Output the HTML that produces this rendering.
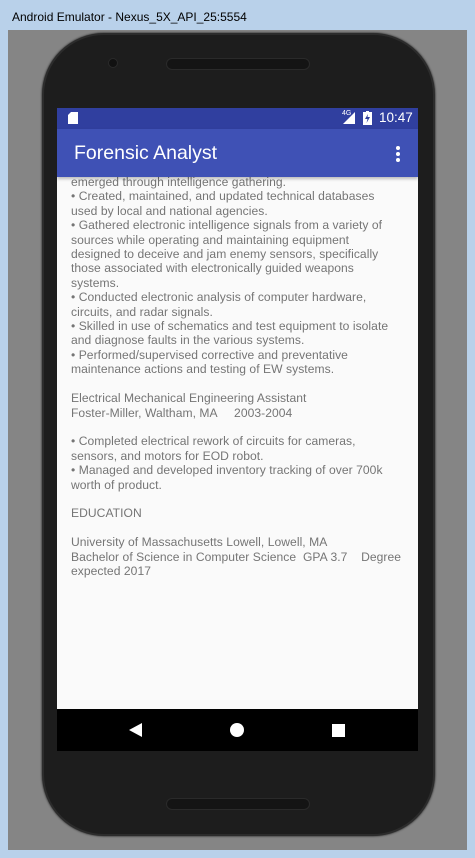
<!DOCTYPE html>
<html><head><meta charset="utf-8"><style>
*{margin:0;padding:0;box-sizing:border-box}
body{width:475px;height:858px;background:#b9d1ea;position:relative;overflow:hidden;font-family:"Liberation Sans",sans-serif}
.title{position:absolute;left:12px;top:10px;font-size:12px;color:#000}
.gray{position:absolute;left:8px;top:30px;width:459px;height:820px;background:#858585}
.phone{position:absolute;left:42px;top:33px;width:393px;height:803px;background:#1d1d1d;border-radius:62px;border:2px solid #2c2c2c;box-shadow:0 0 2px #111}
.spk{position:absolute;left:166px;width:144px;height:12px;border-radius:6px;background:#141414;border:1px solid #2a2a2a}
.cam{position:absolute;left:108px;top:58px;width:10px;height:10px;border-radius:50%;background:#111;border:1px solid #2a2a2a}
.screen{position:absolute;left:57px;top:108px;width:361px;height:643px;background:#fafafa;overflow:hidden}
.status{position:absolute;left:0;top:0;width:361px;height:21px;background:#303f9f;color:#fff}
.app{position:absolute;left:0;top:21px;width:361px;height:48px;background:#3f51b5;box-shadow:0 2px 3px rgba(0,0,0,.25);z-index:2}
.app .t{position:absolute;left:17px;top:13px;font-size:19.5px;color:#fff}
.content{position:absolute;left:14px;top:67px;font-size:12.1px;line-height:14.4px;color:#757575;white-space:pre;letter-spacing:0.05px}
.nav{position:absolute;left:0;top:601px;width:361px;height:42px;background:#000}
</style></head><body>
<div class="title">Android Emulator - Nexus_5X_API_25:5554</div>
<div class="gray"></div>
<div class="phone"></div>
<div class="spk" style="top:58px"></div>
<div class="cam"></div>
<div class="spk" style="top:798px"></div>
<div class="screen">
 <div class="status">
  <svg style="position:absolute;left:11px;top:4px" width="10" height="12"><path d="M3 0H10V12H0V3Z" fill="#fff"/></svg>
  <span style="position:absolute;left:285px;top:2px;font-size:7px">4G</span>
  <svg style="position:absolute;left:284px;top:4px" width="14" height="12"><path d="M14 0V12H2Z" fill="#fff"/></svg>
  <svg style="position:absolute;left:306px;top:3px" width="9" height="14"><rect x="0" y="1" width="9" height="13" fill="#fff"/><rect x="3" y="0" width="3" height="2" fill="#fff"/><path d="M5 3L2 8H4.5L3.5 12L7 6H4.5Z" fill="#303f9f"/></svg>
  <span style="position:absolute;left:322px;top:2px;font-size:13.5px">10:47</span>
 </div>
 <div class="app"><div class="t">Forensic Analyst</div>
  <svg style="position:absolute;left:338px;top:17px" width="6" height="16"><circle cx="3" cy="2" r="2" fill="#fff"/><circle cx="3" cy="8" r="2" fill="#fff"/><circle cx="3" cy="14" r="2" fill="#fff"/></svg></div>
 <div class="content">emerged through intelligence gathering.
• Created, maintained, and updated technical databases
used by local and national agencies.
• Gathered electronic intelligence signals from a variety of
sources while operating and maintaining equipment
designed to deceive and jam enemy sensors, specifically
those associated with electronically guided weapons
systems.
• Conducted electronic analysis of computer hardware,
circuits, and radar signals.
• Skilled in use of schematics and test equipment to isolate
and diagnose faults in the various systems.
• Performed/supervised corrective and preventative
maintenance actions and testing of EW systems.

Electrical Mechanical Engineering Assistant
Foster-Miller, Waltham, MA     2003-2004

• Completed electrical rework of circuits for cameras,
sensors, and motors for EOD robot.
• Managed and developed inventory tracking of over 700k
worth of product.

EDUCATION

University of Massachusetts Lowell, Lowell, MA
Bachelor of Science in Computer Science  GPA 3.7    Degree
expected 2017</div>
 <div class="nav">
  <svg style="position:absolute;left:72px;top:14px" width="13" height="14"><path d="M13 0V14L0 7Z" fill="#fff"/></svg>
  <svg style="position:absolute;left:173px;top:14px" width="14" height="14"><circle cx="7" cy="7" r="7" fill="#fff"/></svg>
  <svg style="position:absolute;left:275px;top:15px" width="13" height="13"><rect width="13" height="13" fill="#fff"/></svg>
 </div>
</div>
</body></html>
